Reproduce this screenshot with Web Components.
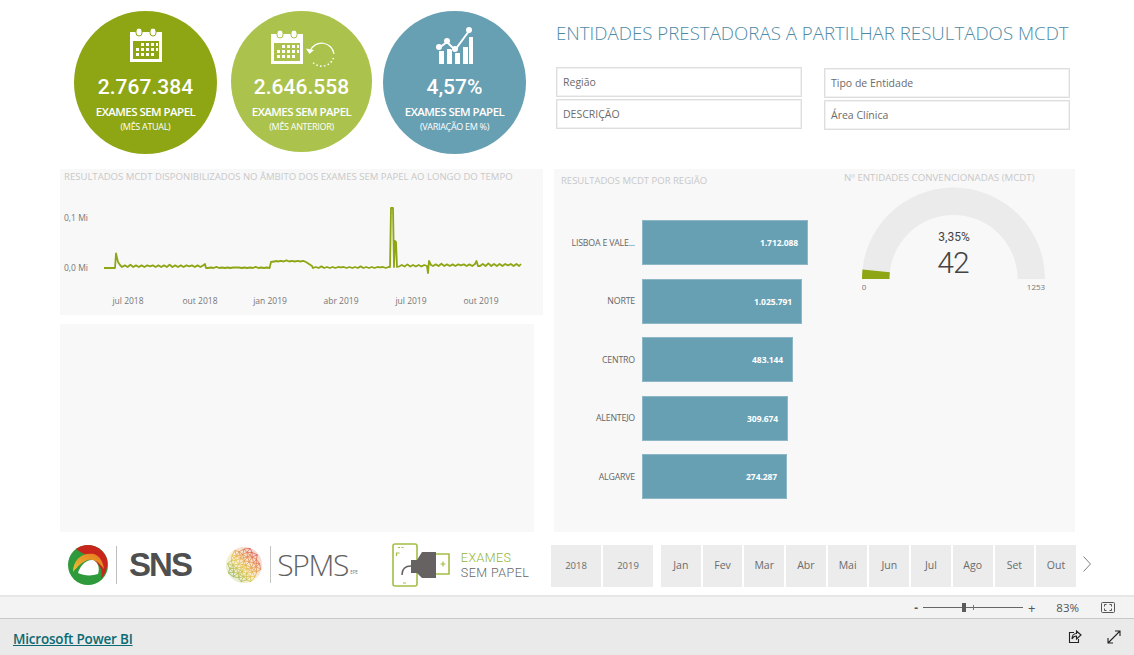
<!DOCTYPE html>
<html lang="pt">
<head>
<meta charset="utf-8">
<title>Exames Sem Papel</title>
<style>
  html, body { margin: 0; background: #fff; }
  body { font-family: "Open Sans", "Noto Sans", sans-serif; overflow: hidden; }
</style>
</head>
<body>
<pbi-dashboard></pbi-dashboard>
<script>
const CALENDAR = /* html */`
  <path d="M1 4h32v30H1z" fill="#fff"/>
  <path d="M4 13h26v18H4z" fill="var(--fill)"/>
  <rect x="7" y="0" width="6" height="8" rx="3" fill="#fff" stroke="var(--fill)" stroke-width="1"/>
  <rect x="21" y="0" width="6" height="8" rx="3" fill="#fff" stroke="var(--fill)" stroke-width="1"/>
  <g fill="#fff">
    <path d="M12 15h3v3h-3zM17 15h3v3h-3zM22 15h3v3h-3zM27 15h2v3h-2z"/>
    <path d="M7 20h3v3H7zM12 20h3v3h-3zM17 20h3v3h-3zM22 20h3v3h-3zM27 20h2v3h-2z"/>
    <path d="M7 25h3v3H7zM12 25h3v3h-3zM17 25h3v3h-3zM22 25h3v3h-3z"/>
  </g>`;

const ICONS = {
  current: { top: 17, svg: /* html */`<svg width="34" height="34" viewBox="0 0 34 34">${CALENDAR}</svg>` },
  previous: { top: 19, shift: 3, svg: /* html */`<svg width="66" height="38" viewBox="0 0 66 38">
    ${CALENDAR}
    <path d="M40 21a12.500 12.500 0 0 1 24 3" fill="none" stroke="#fff" stroke-width="1.200"/>
    <path d="M36 18.500l3.500 5.500 4.500-4z" fill="#fff"/>
    <path d="M63.500 28a12.500 12.500 0 0 1-21 4" fill="none" stroke="#fff" stroke-width="1.500" stroke-dasharray="1.500 2.300"/>
  </svg>` },
  variation: { top: 16, svg: /* html */`<svg width="38" height="38" viewBox="0 0 38 38">
    <path d="M3 37V24h5v13zM11 37V22h5v15zM19 37V26h5v11zM27 37V20h5v17zM33 37V10h4v27z" fill="#fff"/>
    <path d="M3 21l8-6 8 8 14-19" fill="none" stroke="var(--fill)" stroke-width="4.500"/>
    <path d="M3 21l8-6 8 8 14-19" fill="none" stroke="#fff" stroke-width="2"/>
    <circle cx="3" cy="20" r="3" fill="#fff"/><circle cx="11" cy="14" r="3" fill="#fff"/>
    <circle cx="19" cy="22" r="3" fill="#fff"/><circle cx="33" cy="3" r="3" fill="#fff"/>
  </svg>` }
};

class KpiCircle extends HTMLElement {
  constructor() {
    super();
    this.attachShadow({ mode: "open" });
  }

  connectedCallback() {
    const size = this.getAttribute("size") || 143;
    const icon = ICONS[this.getAttribute("icon")];
    this.shadowRoot.innerHTML = /* html */`
    <style>
      :host {
        --fill: ${this.getAttribute("fill")};
        display: flex;
        flex-direction: column;
        align-items: center;
        box-sizing: border-box;
        width: ${size}px;
        height: ${size}px;
        border-radius: 50%;
        background: var(--fill);
        color: #fff;
        text-align: center;
      }
      .icon { box-sizing: border-box; height: 63px; padding: ${icon.top}px 0 0 ${icon.shift || 0}px; }
      .icon svg { display: block; }
      .value { font: 500 21px/26px Roboto, sans-serif; letter-spacing: .05px; }
      .label { font: 600 11.500px/16px "Open Sans", sans-serif; letter-spacing: -.55px; margin-top: 4px; }
      .note { font: 400 9px/12px "Open Sans", sans-serif; letter-spacing: -.3px; margin-top: 1px; }
    </style>
    <div class="icon">${icon.svg}</div>
    <div class="value">${this.getAttribute("value")}</div>
    <div class="label">EXAMES SEM PAPEL</div>
    <div class="note">${this.getAttribute("note")}</div>`;
  }
}
customElements.define("kpi-circle", KpiCircle);

class SlicerBox extends HTMLElement {
  constructor() {
    super();
    this.attachShadow({ mode: "open" });
    this.shadowRoot.innerHTML = /* html */`
    <style>
      :host {
        display: flex;
        align-items: center;
        box-sizing: border-box;
        width: 246px;
        height: 30px;
        padding-left: 6px;
        background: #fff;
        border: 1px solid #dedede;
        box-shadow: inset 0 0 0 1px #f1f1f1;
        color: #6b6b6b;
        font: 400 10.500px "Open Sans", sans-serif;
      }
    </style>
    <slot></slot>`;
  }
}
customElements.define("slicer-box", SlicerBox);

class LineChart extends HTMLElement {
  constructor() {
    super();
    this.attachShadow({ mode: "open" });
  }

  // teeth along the baseline between two x positions
  static wave(from, to, base, amp) {
    const points = [];
    for (let x = from, i = 0; x < to; x += 2.8, i++) {
      points.push(`${x.toFixed(1)},${(base - (i % 2 ? amp : 0) - (i % 7 === 3 ? 0.6 : 0)).toFixed(1)}`);
    }
    return points.join(" ");
  }

  connectedCallback() {
    const w = LineChart.wave;
    const line = [
      "44,99 55,99 56,84.500 58,93 60,96",
      w(62, 144, 98, 1.600),
      "145,95 146,99",
      w(148, 210, 99, .5),
      "211,93 217,92",
      w(218, 244, 92.500, .6),
      "246,93 252,97",
      w(253, 329, 99, 1),
      "330,98 331,39 333,39 334,98 335,72 336,73 337,98",
      w(339, 366, 97.500, 1.500),
      "367,97 368,104 369,92 371,96",
      w(373, 414, 97, 1.600),
      "415,95 416.500,92 418,97",
      w(420, 461, 97, 2),
      "461,95"
    ].join(" ");
    const months = [["jul 2018", 68], ["out 2018", 140], ["jan 2019", 210], ["abr 2019", 281], ["jul 2019", 351], ["out 2019", 421]];
    this.shadowRoot.innerHTML = /* html */`
    <style>
      :host { display: block; height: 146px; background: #f8f8f8; }
      svg { display: block; }
      text { font: 400 8.500px "Open Sans", sans-serif; fill: #777; }
      .title { font-size: 9.550px; fill: #c8c8c8; }
    </style>
    <svg width="483" height="146" viewBox="0 0 483 146">
      <text class="title" x="4" y="11">RESULTADOS MCDT DISPONIBILIZADOS NO ÂMBITO DOS EXAMES SEM PAPEL AO LONGO DO TEMPO</text>
      <text x="4" y="52">0,1 Mi</text>
      <text x="4" y="102">0,0 Mi</text>
      <polyline points="${line}" fill="none" stroke="#8ea614" stroke-width="1.800" stroke-linejoin="round"/>
      ${months.map(([label, x]) => `<text x="${x}" y="135" text-anchor="middle">${label}</text>`).join("")}
    </svg>`;
  }
}
customElements.define("line-chart", LineChart);

class BarChart extends HTMLElement {
  constructor() {
    super();
    this.attachShadow({ mode: "open" });
  }

  connectedCallback() {
    const rows = [
      ["LISBOA E VALE...", "1.712.088", 166],
      ["NORTE", "1.025.791", 160],
      ["CENTRO", "483.144", 151],
      ["ALENTEJO", "309.674", 146],
      ["ALGARVE", "274.287", 145]
    ];
    this.shadowRoot.innerHTML = /* html */`
    <style>
      :host { display: block; box-sizing: border-box; padding-left: 7px; font-family: "Open Sans", sans-serif; }
      h2 { margin: 0; padding-top: 5px; height: 51px; box-sizing: border-box; font: 400 9.500px/13px "Open Sans", sans-serif; color: #c8c8c8; }
      .rows { display: grid; grid-template-columns: 74px auto; column-gap: 7px; row-gap: 13.500px; justify-content: start; }
      .name { align-self: center; text-align: right; font-size: 8.800px; letter-spacing: -.2px; color: #666; white-space: nowrap; }
      .bar {
        display: flex; align-items: center; justify-content: flex-end; box-sizing: border-box;
        height: 45px; padding-right: 9px; background: #679fb3; border: 1px solid #8db7c6;
        color: #fff; font-size: 8.500px; font-weight: 700; letter-spacing: -.1px;
      }
    </style>
    <h2>RESULTADOS MCDT POR REGIÃO</h2>
    <div class="rows">
      ${rows.map(([name, value, width]) => `<div class="name">${name}</div><div class="bar" style="width:${width}px">${value}</div>`).join("")}
    </div>`;
  }
}
customElements.define("bar-chart", BarChart);

class GaugeChart extends HTMLElement {
  constructor() {
    super();
    this.attachShadow({ mode: "open" });
  }

  connectedCallback() {
    const cx = 91.5, cy = 96, R = 91.5, r = 64, a = 6.03 * Math.PI / 180;
    const p = (rad) => `${(cx - rad * Math.cos(a)).toFixed(2)} ${(cy - rad * Math.sin(a)).toFixed(2)}`;
    this.shadowRoot.innerHTML = /* html */`
    <style>
      :host { display: block; }
      h2 { margin: 0 0 0 -18px; padding-top: 2px; height: 14px; box-sizing: border-box; font: 400 9.700px/13px "Open Sans", sans-serif; color: #c8c8c8; white-space: nowrap; }
      svg { display: block; }
      text { font-family: "Open Sans", sans-serif; text-anchor: middle; }
      .pct, .count { font-family: Roboto, sans-serif; }
    </style>
    <h2>Nº ENTIDADES CONVENCIONADAS (MCDT)</h2>
    <svg width="183" height="112" viewBox="0 0 183 112">
      <path d="M0 96a91.500 91.500 0 0 1 183 0h-27.500a64 64 0 0 0-128 0z" fill="#ebebeb"/>
      <path d="M0 96A${R} ${R} 0 0 1 ${p(R)}L${p(r)}A${r} ${r} 0 0 0 27.500 96z" fill="#8ea614"/>
      <text class="pct" x="92" y="58" font-size="12" fill="#444">3,35%</text>
      <text class="count" x="91" y="90" font-size="30" font-weight="300" letter-spacing="-1" fill="#444">42</text>
      <text x="2" y="107" font-size="8" fill="#777">0</text>
      <text x="174" y="107" font-size="8" fill="#777">1253</text>
    </svg>`;
  }
}
customElements.define("gauge-chart", GaugeChart);

class SnsLogo extends HTMLElement {
  constructor() {
    super();
    this.attachShadow({ mode: "open" });
    this.shadowRoot.innerHTML = /* html */`
    <style>
      :host { display: flex; align-items: center; height: 40px; }
      .rule { width: 1px; height: 38px; background: #bdbdbd; margin: 0 12px 0 8px; }
      span { font: 700 33px/40px "Liberation Sans", sans-serif; letter-spacing: -1.900px; color: #4f4f4f; }
    </style>
    <svg width="40" height="40" viewBox="0 0 40 40">
      <defs>
        <linearGradient id="o" x1="0" y1="1" x2="1" y2="0"><stop offset="0" stop-color="#e9c433"/><stop offset="1" stop-color="#e8741e"/></linearGradient>
      </defs>
      <circle cx="20" cy="20" r="20" fill="#2f9a3b"/>
      <path d="M8 4A20 20 0 0 1 39 14C40 20 39 27 33 34C35 26 33 22 28 17C22 10 14 9 8 4Z" fill="#c8261d"/>
      <path d="M5 27C5 15 14 7 26 9C32 11 35 17 36 24C32 18 27 14 20 15C14 17 10 21 5 27Z" fill="url(#o)"/>
      <path d="M10 28C12 20 19 14 25 15C30 17 32 23 30 29C24 31 16 31 10 28Z" fill="#fff"/>
    </svg>
    <div class="rule"></div>
    <span>SNS</span>`;
  }
}
customElements.define("sns-logo", SnsLogo);

class SpmsLogo extends HTMLElement {
  constructor() {
    super();
    this.attachShadow({ mode: "open" });
  }

  connectedCallback() {
    // globe mesh: golden-angle points joined to their neighbours
    const pts = [];
    for (let i = 0; i < 46; i++) {
      const rad = 18 * Math.sqrt((i + .5) / 46), t = i * 2.39996;
      pts.push([18 + rad * Math.cos(t), 18 + rad * Math.sin(t)]);
    }
    let mesh = "";
    pts.forEach((a, i) => {
      pts.slice(i + 1).forEach((b) => {
        if (Math.hypot(a[0] - b[0], a[1] - b[1]) < 7.500) {
          mesh += `M${a[0].toFixed(1)} ${a[1].toFixed(1)}L${b[0].toFixed(1)} ${b[1].toFixed(1)}`;
        }
      });
    });
    this.shadowRoot.innerHTML = /* html */`
    <style>
      :host { display: flex; align-items: center; height: 40px; }
      .rule { width: 1px; height: 37px; background: #c4c4c4; margin: 0 6px 0 8px; }
      .name { font: 300 30px/40px "Open Sans", sans-serif; letter-spacing: -1.300px; color: #626262; }
      .epe { font: 400 4.500px/40px "Open Sans", sans-serif; color: #777; align-self: flex-end; margin: 0 0 -7px 2px; }
    </style>
    <svg width="36" height="36" viewBox="0 0 36 36">
      <defs>
        <linearGradient id="g" x1="0" y1="1" x2="1" y2="0">
          <stop offset="0" stop-color="#6fb04f"/><stop offset=".45" stop-color="#e8c44c"/><stop offset="1" stop-color="#d8304a"/>
        </linearGradient>
      </defs>
      <circle cx="18" cy="18" r="18" fill="url(#g)" opacity=".25"/>
      <path d="${mesh}" fill="none" stroke="url(#g)" stroke-width=".8"/>
    </svg>
    <div class="rule"></div>
    <span class="name">SPMS</span><span class="epe">EPE</span>`;
  }
}
customElements.define("spms-logo", SpmsLogo);

class PaperlessLogo extends HTMLElement {
  constructor() {
    super();
    this.attachShadow({ mode: "open" });
    this.shadowRoot.innerHTML = /* html */`
    <style>
      :host { display: flex; align-items: center; height: 44px; }
      .text { margin-left: 11px; font: 300 12.500px/15px Roboto, sans-serif; letter-spacing: .45px; color: #666; }
      .text b { display: block; font-weight: 300; color: #93b531; }
    </style>
    <svg width="58" height="44" viewBox="0 0 58 44" fill="none">
      <rect x="1" y="1" width="24" height="42" rx="2" stroke="#a3bf45" stroke-width="1.600" fill="#fff"/>
      <path d="M6 4.500h2M9.500 4.500h2M11 40h3" stroke="#a3bf45" stroke-width="1.200"/>
      <path d="M4.500 13v-3h3" stroke="#a3bf45" stroke-width="1.200"/>
      <path d="M44 11h13v20H44" stroke="#a3bf45" stroke-width="1.600" fill="#fff"/>
      <path d="M48.500 21h5M51 18.500v5" stroke="#a3bf45" stroke-width="1.200"/>
      <path d="M19 17h6l5-8h14v26H30l-5-5h-6z" fill="#666262"/>
      <path d="M10 32c0-6 3-9 9-9" stroke="#666262" stroke-width="1.500"/>
    </svg>
    <div class="text"><b>EXAMES</b>SEM PAPEL</div>`;
  }
}
customElements.define("paperless-logo", PaperlessLogo);

class TimeSlicer extends HTMLElement {
  constructor() {
    super();
    this.attachShadow({ mode: "open" });
  }

  connectedCallback() {
    const cell = (text) => `<div class="cell">${text}</div>`;
    const years = ["2018", "2019"], months = ["Jan", "Fev", "Mar", "Abr", "Mai", "Jun", "Jul", "Ago", "Set", "Out"];
    this.shadowRoot.innerHTML = /* html */`
    <style>
      :host { display: flex; width: max-content; align-items: center; font-family: "Open Sans", sans-serif; color: #6b6b6b; }
      .group { display: grid; grid-auto-flow: column; column-gap: 2px; }
      .years { grid-auto-columns: 50px; font-size: 9.500px; margin-right: 8px; }
      .months { grid-auto-columns: 39.700px; font-size: 10.500px; }
      .cell { height: 42px; display: flex; align-items: center; justify-content: center; background: #ececec; padding-bottom: 2px; box-sizing: border-box; }
      svg { flex: none; margin-left: 6px; margin-top: -4px; }
    </style>
    <div class="group years">${years.map(cell).join("")}</div>
    <div class="group months">${months.map(cell).join("")}</div>
    <svg width="10" height="18" viewBox="0 0 10 18"><path d="M1.500 1.500l7 7.500-7 7.500" fill="none" stroke="#808080"/></svg>`;
  }
}
customElements.define("time-slicer", TimeSlicer);

class ZoomBar extends HTMLElement {
  constructor() {
    super();
    this.attachShadow({ mode: "open" });
    this.shadowRoot.innerHTML = /* html */`
    <style>
      :host {
        display: flex; align-items: center; justify-content: flex-end; box-sizing: border-box;
        height: 24px; padding-right: 19px;
        background: #f3f3f3; border-top: 2px solid #e6e6e6; border-bottom: 1px solid #c8c8c8;
        color: #555; font: 400 11.500px "Open Sans", sans-serif;
      }
      .minus { font-weight: 700; margin-right: 5px; }
      .track { position: relative; width: 100px; height: 1px; background: #666; }
      .track i { position: absolute; left: 39px; top: -4px; width: 4px; height: 9px; background: #5a5a5a; }
      .track u { position: absolute; left: 50px; top: -2px; width: 1px; height: 5px; background: #777; }
      .plus { font-size: 13px; margin: 0 21px 0 5px; }
      .pct { margin-right: 22px; }
      svg { display: block; }
    </style>
    <span class="minus">-</span>
    <div class="track"><i></i><u></u></div>
    <span class="plus">+</span>
    <span class="pct">83%</span>
    <svg width="14" height="11" viewBox="0 0 14 11" fill="none">
      <rect x=".5" y=".5" width="13" height="10" rx="1" stroke="#555"/>
      <path d="M3.500 4.500v-2h2M8.500 2.500h2v2M10.500 6.500v2h-2M5.500 8.500h-2v-2" stroke="#555"/>
    </svg>`;
  }
}
customElements.define("zoom-bar", ZoomBar);

class ReportFooter extends HTMLElement {
  constructor() {
    super();
    this.attachShadow({ mode: "open" });
    this.shadowRoot.innerHTML = /* html */`
    <style>
      :host {
        display: flex; align-items: center; box-sizing: border-box;
        height: 36px; padding: 3px 13px 0;
        background: #eaeaea;
      }
      a { font: 600 13.500px "Open Sans", sans-serif; letter-spacing: -.2px; color: #0b6a73; text-decoration: underline; }
      .tools { margin-left: auto; display: flex; gap: 25px; align-items: center; margin-top: -3px; }
      svg { display: block; }
    </style>
    <a href="#">Microsoft Power BI</a>
    <div class="tools">
      <svg width="14" height="14" viewBox="0 0 14 14" fill="none" stroke="#222" stroke-width="1.100">
        <path d="M6 2.500H1.500v10h9V9"/>
        <path d="M13 5L8.500 1v2.500C5.500 3.500 4 6 4 9c1-2 2.500-3 4.500-3v3z" fill="#eaeaea"/>
      </svg>
      <svg width="14" height="14" viewBox="0 0 14 14" fill="none" stroke="#222" stroke-width="1.100">
        <path d="M1 13L13 1M8 1h5v5M1 8v5h5"/>
      </svg>
    </div>`;
  }
}
customElements.define("report-footer", ReportFooter);

class PbiDashboard extends HTMLElement {
  constructor() {
    super();
    this.attachShadow({ mode: "open" });
    this.shadowRoot.innerHTML = /* html */`
    <style>
      :host { display: block; width: 1134px; height: 655px; overflow: hidden; }
      .report {
        height: 595px; padding-left: 60px;
        display: grid; grid-template-columns: 483px 521px; column-gap: 11px;
        grid-template-rows: 169px 363px 1fr;
      }
      .kpis { display: flex; padding: 11px 0 0 14px; align-items: flex-start; }
      kpi-circle + kpi-circle { margin-left: 14px; }
      kpi-circle + kpi-circle + kpi-circle { margin-left: 11px; }
      .heading { padding: 19px 0 0 2px; }
      h1 {
        margin: 0; font: 300 18.700px/28px "Open Sans", sans-serif;
        color: #4e8aa6; white-space: nowrap;
      }
      .filters { display: flex; gap: 22px; margin-top: 20px; }
      .filters > div { display: flex; flex-direction: column; gap: 2px; }
      .filters > div + div { padding-top: 1px; }
      .left { display: flex; flex-direction: column; gap: 9px; }
      .blank { width: 474px; height: 208px; background: #f8f8f8; }
      .right { background: #f8f8f8; display: flex; }
      bar-chart { width: 297px; }
      gauge-chart { width: 183px; margin-left: 11px; }
      .logos { display: flex; align-items: center; padding: 10px 0 0 8px; height: 45px; }
      sns-logo { margin-right: 35px; }
      spms-logo { margin-right: 34px; }
      time-slicer { margin-left: -3px; padding-top: 13px; align-self: start; }
    </style>
    <div class="report">
      <div class="kpis">
        <kpi-circle fill="#8ea614" icon="current" value="2.767.384" note="(MÊS ATUAL)"></kpi-circle>
        <kpi-circle fill="#abc34d" icon="previous" size="141" value="2.646.558" note="(MÊS ANTERIOR)"></kpi-circle>
        <kpi-circle fill="#679fb3" icon="variation" value="4,57%" note="(VARIAÇÃO EM %)"></kpi-circle>
      </div>
      <div class="heading">
        <h1>ENTIDADES PRESTADORAS A PARTILHAR RESULTADOS MCDT</h1>
        <div class="filters">
          <div><slicer-box>Região</slicer-box><slicer-box>DESCRIÇÃO</slicer-box></div>
          <div><slicer-box>Tipo de Entidade</slicer-box><slicer-box>Área Clínica</slicer-box></div>
        </div>
      </div>
      <div class="left">
        <line-chart></line-chart>
        <div class="blank"></div>
      </div>
      <div class="right">
        <bar-chart></bar-chart>
        <gauge-chart></gauge-chart>
      </div>
      <div class="logos">
        <sns-logo></sns-logo>
        <spms-logo></spms-logo>
        <paperless-logo></paperless-logo>
      </div>
      <time-slicer></time-slicer>
    </div>
    <zoom-bar></zoom-bar>
    <report-footer></report-footer>`;
  }
}
customElements.define("pbi-dashboard", PbiDashboard);
</script>
</body>
</html>
